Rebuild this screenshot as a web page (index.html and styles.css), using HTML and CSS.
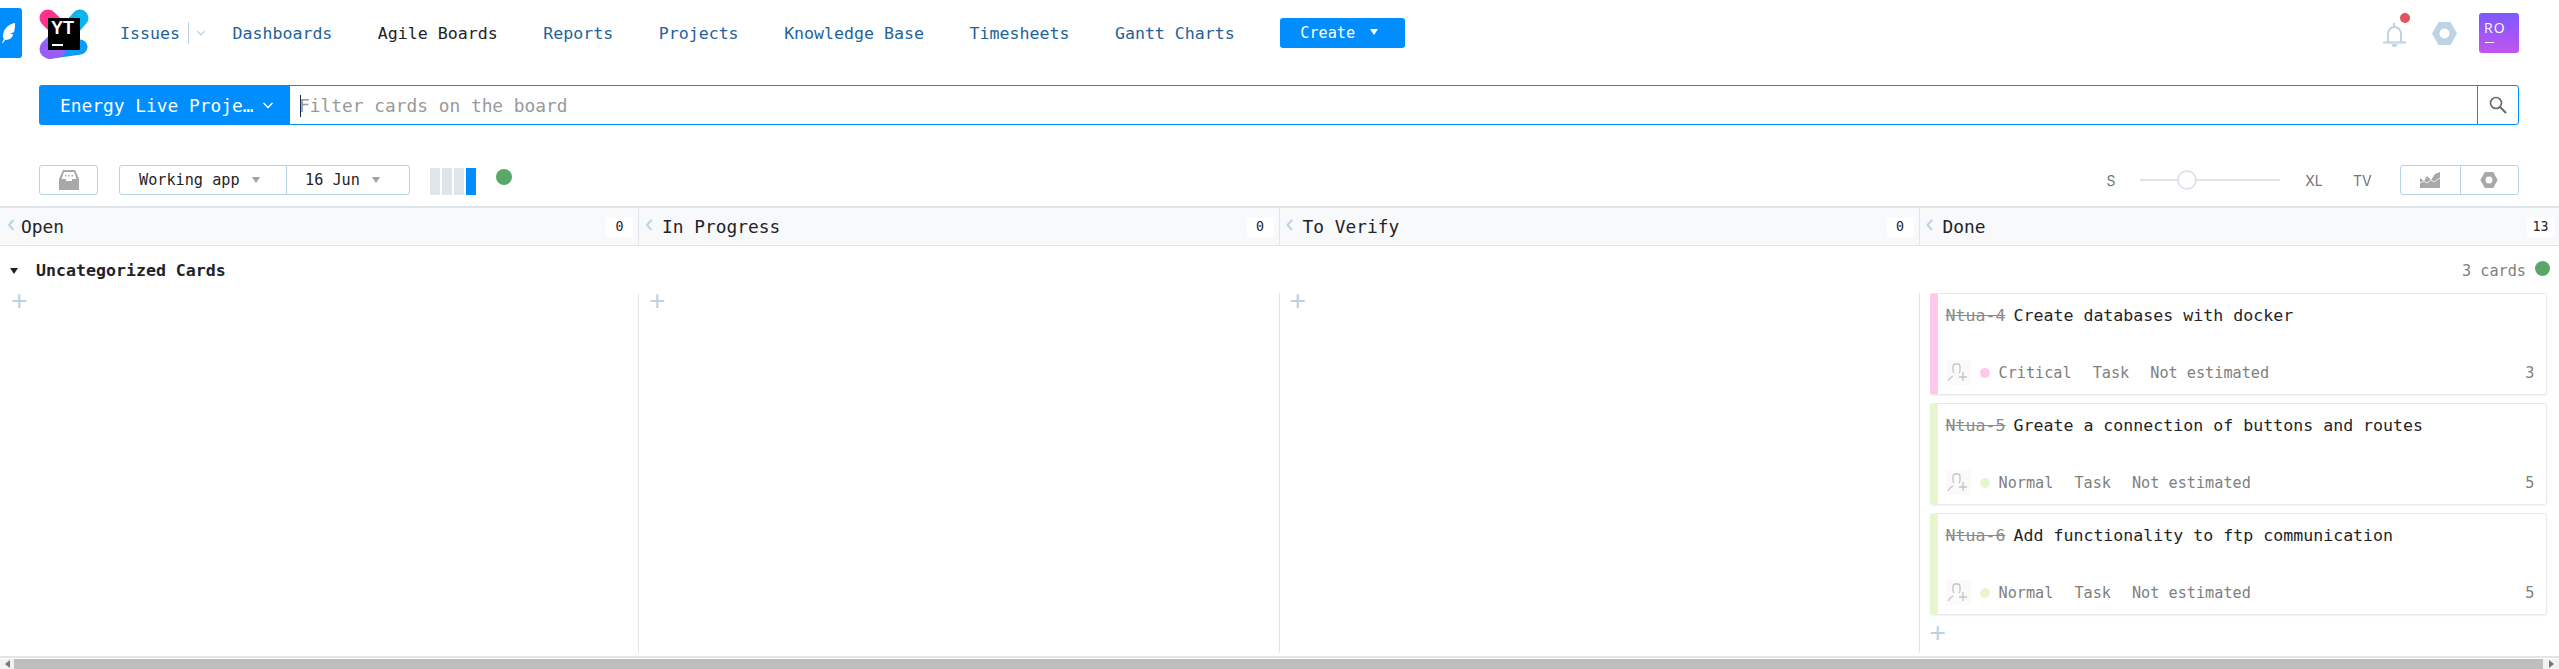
FILE: index.html
```html
<!DOCTYPE html>
<html lang="en">
  <head>
    <meta charset="UTF-8" />
    <title>Agile Boards</title>
    <link rel="stylesheet" href="styles.css">
  </head>
  <body>
    <header class="topbar">
      <div class="side-tab">
        <svg width="14" height="20" viewBox="0 0 14 20"><path d="M13 0C7 1 2 5 1 12c0 2 0 3 1 4L0 20h1l2-3c5 0 8-3 8-6l-3 0 4-2c1-3 1-6 1-9z" fill="#fff"/></svg>
      </div>
      <svg class="logo" width="50" height="50" viewBox="0 0 50 50">
        <defs>
          <linearGradient id="lg1" x1="0" y1="0" x2="1" y2="1"><stop offset="0" stop-color="#ff318c"/><stop offset="1" stop-color="#ff318c"/></linearGradient>
          <linearGradient id="lg2" x1="0" y1="1" x2="1" y2="0"><stop offset="0" stop-color="#9b5cf6"/><stop offset="1" stop-color="#07c3f2"/></linearGradient>
        </defs>
        <path d="M9 9L26 26" stroke="url(#lg1)" stroke-width="17" stroke-linecap="round"/>
        <path d="M41 9L26 26" stroke="#0ab4f0" stroke-width="17" stroke-linecap="round"/>
        <path d="M10 40L26 24" stroke="url(#lg2)" stroke-width="19" stroke-linecap="round"/>
        <path d="M13 42L41 38" stroke="#0a9cf5" stroke-width="15" stroke-linecap="round"/>
        <path d="M11 43L20 41" stroke="#9b5cf6" stroke-width="14" stroke-linecap="round"/>
        <rect x="9" y="9" width="32" height="32" fill="#000"/>
        <text x="12" y="25" class="logo-text">YT</text>
        <rect x="13" y="35" width="11" height="2" fill="#fff"/>
      </svg>
      <nav class="nav">
        <div class="nav-issues">
          <a class="nav-link">Issues</a>
          <span class="nav-sep"></span>
          <svg width="10" height="6" viewBox="0 0 10 6"><path d="M1 1l4 4 4-4" fill="none" stroke="#b8d2e6" stroke-width="1.2"/></svg>
        </div>
        <a class="nav-link">Dashboards</a>
        <a class="nav-link nav-active">Agile Boards</a>
        <a class="nav-link">Reports</a>
        <a class="nav-link">Projects</a>
        <a class="nav-link">Knowledge Base</a>
        <a class="nav-link">Timesheets</a>
        <a class="nav-link">Gantt Charts</a>
        <button class="create-btn">Create<span class="caret caret-white"></span></button>
      </nav>
      <div class="top-right">
        <div class="bell">
          <svg width="24" height="26" viewBox="0 0 24 26"><path d="M11 1v4M5 20v-8c0-4 3-7 6.500-7S18 8 18 12v8M0 20.500h23" fill="none" stroke="#bcd4e6" stroke-width="2"/><path d="M8.500 22h6c0 2-1.500 3-3 3s-3-1-3-3z" fill="#bcd4e6"/></svg>
          <span class="bell-dot"></span>
        </div>
        <svg width="25" height="23" viewBox="0 0 25 23"><path fill-rule="evenodd" d="M6.500 0h12L25 11.500 18.500 23h-12L0 11.500zM12.500 6.500a5 5 0 1 0 0 10 5 5 0 0 0 0-10z" fill="#bcd4e6"/></svg>
        <div class="avatar">
          <span>RO</span>
          <span class="avatar-bar"></span>
        </div>
      </div>
    </header>

    <div class="search">
      <button class="search-project">
        <span>Energy Live Proje…</span>
        <svg width="12" height="7" viewBox="0 0 12 7"><path d="M1.500 1l4.500 4.500L10.500 1" fill="none" stroke="#fff" stroke-width="1.500"/></svg>
      </button>
      <div class="search-input">
        <span class="search-cursor"></span>
        <span class="search-placeholder">Filter cards on the board</span>
      </div>
      <button class="search-btn">
        <svg width="18" height="18" viewBox="0 0 18 18"><circle cx="7" cy="7" r="5.500" fill="none" stroke="#666" stroke-width="1.600"/><path d="M11 11l6 6" stroke="#666" stroke-width="2"/></svg>
      </button>
    </div>

    <div class="toolbar">
      <button class="tool-btn inbox-btn">
        <svg width="20" height="20" viewBox="0 0 20 20"><path d="M4 0h12l4 9v11H0V9z" fill="#a8a8a8"/><path d="M5 2h10l2.500 7H13v2H7V9H2.500z" fill="#fff"/><path d="M6 5h1.500v1.500H6zM9.200 5h1.500v1.500H9.200zM12.500 5H14v1.500h-1.500z" fill="#a8a8a8"/></svg>
      </button>
      <div class="tool-group sprint-group">
        <button class="sprint-btn sprint-name">Working app<span class="caret"></span></button>
        <button class="sprint-btn sprint-date">16 Jun<span class="caret"></span></button>
      </div>
      <div class="bars">
        <span class="bar"></span>
        <span class="bar"></span>
        <span class="bar"></span>
        <span class="bar bar-on"></span>
      </div>
      <span class="green-dot toolbar-dot"></span>
      <div class="size-scale">
        <span class="size-label size-s">S</span>
        <div class="slider"><span class="slider-knob"></span></div>
        <span class="size-label size-xl">XL</span>
        <span class="size-label size-tv">TV</span>
      </div>
      <div class="tool-group chart-group">
        <button class="chart-btn">
          <svg width="20" height="16" viewBox="0 0 20 16"><path d="M0 6l4 3 3-5 4 4 4-6 5-2v16H0z" fill="#a8a8a8"/><path d="M0 11l4-2 3 2 4-3 3 2 6-4" fill="none" stroke="#fff" stroke-width=".8"/></svg>
        </button>
        <button class="chart-btn">
          <svg width="18" height="16" viewBox="0 0 25 23"><path fill-rule="evenodd" d="M6.500 0h12L25 11.500 18.500 23h-12L0 11.500zM12.500 6.500a5 5 0 1 0 0 10 5 5 0 0 0 0-10z" fill="#a8a8a8"/></svg>
        </button>
      </div>
    </div>

    <div class="board-head">
      <div class="head-cell">
        <span class="head-back">‹</span><span class="head-title">Open</span><span class="head-count">0</span>
      </div>
      <div class="head-cell">
        <span class="head-back">‹</span><span class="head-title">In Progress</span><span class="head-count">0</span>
      </div>
      <div class="head-cell">
        <span class="head-back">‹</span><span class="head-title">To Verify</span><span class="head-count">0</span>
      </div>
      <div class="head-cell">
        <span class="head-back">‹</span><span class="head-title">Done</span><span class="head-count">13</span>
      </div>
    </div>

    <div class="swimlane">
      <span class="swim-caret"></span>
      <span class="swim-title">Uncategorized Cards</span>
      <span class="swim-count">3 cards</span>
      <span class="green-dot swim-dot"></span>
    </div>

    <main class="columns">
      <div class="column"><span class="add-card">+</span></div>
      <div class="column"><span class="add-card">+</span></div>
      <div class="column"><span class="add-card">+</span></div>
      <div class="column">
        <article class="card card-critical">
          <div class="card-title"><s class="card-id">Ntua-4</s><span>Create databases with docker</span></div>
          <div class="card-meta">
            <span class="assignee"><svg width="20" height="22" viewBox="0 0 20 22"><path d="M7 2h3c1 0 2 1 2 3v3c0 2-1 3-1 3M6 11c-1-1-1-2-1-3V5c0-2 1-3 2-3M5 14c-3 1-4 3-5 5M15 10v9M11 15h8" fill="none" stroke="#c4c4c4" stroke-width="1.300"/></svg></span>
            <span class="prio-dot"></span>
            <span>Critical</span>
            <span>Task</span>
            <span>Not estimated</span>
            <span class="card-points">3</span>
          </div>
        </article>
        <article class="card card-normal">
          <div class="card-title"><s class="card-id">Ntua-5</s><span>Greate a connection of buttons and routes</span></div>
          <div class="card-meta">
            <span class="assignee"><svg width="20" height="22" viewBox="0 0 20 22"><path d="M7 2h3c1 0 2 1 2 3v3c0 2-1 3-1 3M6 11c-1-1-1-2-1-3V5c0-2 1-3 2-3M5 14c-3 1-4 3-5 5M15 10v9M11 15h8" fill="none" stroke="#c4c4c4" stroke-width="1.300"/></svg></span>
            <span class="prio-dot"></span>
            <span>Normal</span>
            <span>Task</span>
            <span>Not estimated</span>
            <span class="card-points">5</span>
          </div>
        </article>
        <article class="card card-normal">
          <div class="card-title"><s class="card-id">Ntua-6</s><span>Add functionality to ftp communication</span></div>
          <div class="card-meta">
            <span class="assignee"><svg width="20" height="22" viewBox="0 0 20 22"><path d="M7 2h3c1 0 2 1 2 3v3c0 2-1 3-1 3M6 11c-1-1-1-2-1-3V5c0-2 1-3 2-3M5 14c-3 1-4 3-5 5M15 10v9M11 15h8" fill="none" stroke="#c4c4c4" stroke-width="1.300"/></svg></span>
            <span class="prio-dot"></span>
            <span>Normal</span>
            <span>Task</span>
            <span>Not estimated</span>
            <span class="card-points">5</span>
          </div>
        </article>
        <span class="add-card add-card-last">+</span>
      </div>
    </main>

    <div class="scrollbar">
      <span class="scroll-arrow scroll-left"></span>
      <span class="scroll-thumb"></span>
      <span class="scroll-arrow scroll-right"></span>
    </div>
  </body>
</html>
```

FILE: styles.css
```css
* {
  box-sizing: border-box;
}
html,
body {
  height: 100%;
}
body {
  margin: 0;
  display: flex;
  flex-direction: column;
  overflow: hidden;
  background: #fff;
  color: #1f2326;
  font-family: "DejaVu Sans Mono", monospace;
  font-size: 16.6px;
}
button {
  font: inherit;
  border: none;
  background: none;
  padding: 0;
  color: inherit;
}

/* top bar */
.topbar {
  display: flex;
  align-items: center;
  height: 66px;
  flex: none;
}
.side-tab {
  width: 22px;
  height: 50px;
  background: #008eff;
  border-radius: 0 3px 3px 0;
  display: flex;
  align-items: center;
  justify-content: flex-end;
  padding-right: 6px;
}
.logo {
  margin: 2px 31px 0 17px;
}
.logo-text {
  font-family: "Liberation Sans", sans-serif;
  font-weight: bold;
  font-size: 18px;
  fill: #fff;
}
.nav {
  display: flex;
  align-items: center;
  gap: 45.500px;
}
.nav-issues {
  display: flex;
  align-items: center;
  margin-right: -19px;
}
.nav-link {
  color: #22639c;
  white-space: nowrap;
}
.nav-active {
  color: #1f2326;
}
.nav-sep {
  width: 1px;
  height: 22px;
  background: #b8d2e6;
  margin: 0 7px 0 8px;
}
.create-btn {
  width: 125px;
  height: 30px;
  background: #008eff;
  color: #fff;
  border-radius: 3px;
  font-size: 15.200px;
  display: flex;
  align-items: center;
  padding-left: 20px;
  gap: 15px;
}
.caret {
  display: inline-block;
  width: 0;
  height: 0;
  border: 4px solid transparent;
  border-top: 6px solid #a0a0a0;
  border-bottom: 0;
}
.caret-white {
  border-top-color: #fff;
  margin-bottom: 3px;
}
.top-right {
  margin-left: auto;
  margin-right: 40px;
  display: flex;
  align-items: center;
  gap: 22px;
}
.bell {
  position: relative;
  height: 26px;
  margin-right: 3px;
  margin-top: 3px;
}
.bell-dot {
  position: absolute;
  top: -9px;
  right: -3px;
  width: 10px;
  height: 10px;
  border-radius: 50%;
  background: #e0535e;
}
.avatar {
  width: 40px;
  height: 40px;
  border-radius: 3px;
  background: linear-gradient(#7c59ff, #c155ee);
  color: #fff;
  font-family: "Open Sans", sans-serif;
  font-size: 14px;
  letter-spacing: 1px;
  padding: 5px 0 0 5px;
  display: flex;
  flex-direction: column;
  line-height: 19px;
}
.avatar-bar {
  width: 9px;
  height: 1px;
  background: #fff;
  margin: 5px 0 0 1px;
}

/* search */
.search {
  display: flex;
  height: 40px;
  margin: 19px 40px 0 39px;
  flex: none;
}
.search-project {
  width: 251px;
  background: #008eff;
  color: #fff;
  border-radius: 3px 0 0 3px;
  font-size: 17.850px;
  display: flex;
  align-items: center;
  padding-left: 21px;
  gap: 9px;
}
.search-input {
  flex: 1;
  display: flex;
  align-items: center;
  padding-left: 10px;
  border: 1px solid #008eff;
  border-left: none;
  border-right: none;
  font-size: 17.850px;
}
.search-cursor {
  width: 1px;
  height: 22px;
  background: #1f2326;
  margin-top: 2px;
}
.search-placeholder {
  color: #999;
  margin-left: -2px;
}
.search-btn {
  width: 42px;
  border: 1px solid #008eff;
  border-radius: 0 3px 3px 0;
  display: flex;
  align-items: center;
  justify-content: center;
}

/* toolbar */
.toolbar {
  display: flex;
  align-items: center;
  height: 30px;
  margin: 40px 40px 0 39px;
  font-size: 15.200px;
  flex: none;
}
.tool-btn,
.tool-group {
  height: 30px;
  border: 1px solid #b8d2e6;
  border-radius: 3px;
  display: flex;
  align-items: center;
  justify-content: center;
}
.inbox-btn {
  width: 59px;
}
.sprint-group {
  margin-left: 21px;
  width: 291px;
}
.sprint-btn {
  height: 100%;
  display: flex;
  align-items: center;
  gap: 12px;
  padding-left: 18px;
}
.sprint-name {
  width: 167px;
  padding-left: 19px;
  border-right: 1px solid #b8d2e6;
}
.sprint-date {
  flex: 1;
}
.bars {
  display: flex;
  gap: 2px;
  margin-left: 20px;
  height: 27px;
  align-self: flex-end;
}
.bar {
  width: 10px;
  background: #dfe5eb;
}
.bar-on {
  background: #008eff;
}
.green-dot {
  border-radius: 50%;
  background: #59a869;
}
.toolbar-dot {
  width: 16px;
  height: 16px;
  margin: -6px 0 0 20px;
}
.size-scale {
  margin-left: auto;
  display: flex;
  align-items: center;
  font-family: "Inter", sans-serif;
  font-size: 14px;
  color: #737577;
}
.size-label {
  text-align: center;
}
.size-s {
  width: 12px;
  margin-right: 2px;
}
.slider {
  position: relative;
  width: 140px;
  height: 2px;
  background: #dfe5eb;
  margin: 0 23px;
  left: -2px;
}
.slider-knob {
  position: absolute;
  left: 37px;
  top: -9px;
  width: 20px;
  height: 20px;
  border-radius: 50%;
  background: #fff;
  border: 2px solid #dfe5eb;
}
.size-xl {
  width: 18px;
}
.size-tv {
  width: 18px;
  margin: 0 29px 0 30px;
}
.chart-group {
  width: 119px;
}
.chart-btn {
  width: 50%;
  height: 100%;
  display: flex;
  align-items: center;
  justify-content: center;
}
.chart-btn + .chart-btn {
  border-left: 1px solid #b8d2e6;
}

/* board */
.board-head {
  display: grid;
  grid-template-columns: 638px 640.500px 640px 1fr;
  height: 40px;
  margin-top: 11px;
  background: #f7f9fa;
  border-top: 2px solid #dfe5eb;
  border-bottom: 1px solid #dfe5eb;
  flex: none;
}
.head-cell {
  display: flex;
  align-items: center;
  padding: 0 5px 0 6px;
  border-left: 1px solid #dfe5eb;
}
.head-cell:first-child {
  border-left: none;
  padding-left: 7px;
}
.head-back {
  color: #b8d2e6;
  width: 14px;
  font-family: "Liberation Sans", sans-serif;
  font-size: 25px;
  line-height: 1;
  margin-top: -6px;
}
.head-cell + .head-cell .head-back {
  width: 17px;
}
.head-title {
  font-size: 17.850px;
}
.head-count {
  margin-left: auto;
  min-width: 27px;
  height: 20px;
  padding: 0 5px;
  border-radius: 3px;
  background: #fff;
  font-size: 13.300px;
  line-height: 20px;
  text-align: center;
}
.swimlane {
  display: flex;
  align-items: center;
  height: 47px;
  padding: 2px 9px 0 10px;
  flex: none;
}
.swim-caret {
  width: 0;
  height: 0;
  border: 4px solid transparent;
  border-top: 6px solid #1f2326;
  border-bottom: 0;
  margin-right: 18px;
}
.swim-title {
  font-weight: bold;
}
.swim-count {
  margin-left: auto;
  font-size: 15.200px;
  color: #808080;
  margin-right: 9px;
}
.swim-dot {
  width: 15px;
  height: 15px;
  margin-top: -4px;
}
.columns {
  flex: 1;
  min-height: 0;
  display: grid;
  grid-template-columns: 638px 640.500px 640px 1fr;
  padding-bottom: 3px;
}
.column {
  display: flex;
  flex-direction: column;
  align-items: flex-start;
  border-left: 1px solid #dfe5eb;
  padding-left: 10px;
}
.column:first-child {
  border-left: none;
  padding-left: 11px;
}
.add-card {
  color: #b8d2e6;
  font-family: "Liberation Sans", sans-serif;
  font-size: 28px;
  font-weight: normal;
  line-height: 18px;
  margin-top: -1px;
}
.add-card-last {
  margin-top: 9px;
}
.card {
  width: 617px;
  height: 102px;
  flex: none;
  margin-bottom: 8px;
  padding: 12px 11px 9px 8px;
  border: 1px solid #e6eaee;
  border-left-width: 8px;
  border-radius: 3px;
  box-shadow: 0 1px 2px rgba(0, 0, 0, 0.06);
  display: flex;
  flex-direction: column;
  justify-content: space-between;
}
.card:last-of-type {
  margin-bottom: 0;
}
.card-critical {
  border-left-color: #ffc8ea;
}
.card-normal {
  border-left-color: #e6f6cf;
}
.card-title {
  display: flex;
  gap: 8px;
  line-height: 20px;
}
.card-id {
  color: #8a8a8a;
}
.card-meta {
  display: flex;
  align-items: center;
  font-size: 15.200px;
  color: #808080;
  gap: 21px;
  height: 25px;
}
.assignee {
  width: 25px;
  height: 25px;
  background: #fafafa;
  display: flex;
  align-items: center;
  justify-content: center;
  margin-right: -11.500px;
}
.prio-dot {
  width: 10px;
  height: 10px;
  border-radius: 50%;
  margin-right: -12.500px;
}
.card-critical .prio-dot {
  background: #ffc8ea;
}
.card-normal .prio-dot {
  background: #e6f6cf;
}
.card-points {
  margin-left: auto;
}

/* horizontal scrollbar */
.scrollbar {
  display: flex;
  align-items: center;
  height: 13px;
  flex: none;
  background: #f1f1f1;
  border-top: 2px solid #dfe5eb;
  box-shadow: inset 0 1px 0 #fff;
  padding-top: 1px;
}
.scroll-arrow {
  width: 14px;
  display: flex;
  justify-content: center;
  height: 10px;
}
.scroll-left::before,
.scroll-right::before {
  content: "";
  margin-top: 1px;
  border: 4px solid transparent;
  height: 0;
}
.scroll-left::before {
  border-right: 5px solid #777;
  border-left: 0;
}
.scroll-right::before {
  border-left: 5px solid #777;
  border-right: 0;
}
.scroll-thumb {
  flex: 1;
  height: 10px;
  background: #bebebe;
}
.scroll-right {
  width: 16px;
}
```
